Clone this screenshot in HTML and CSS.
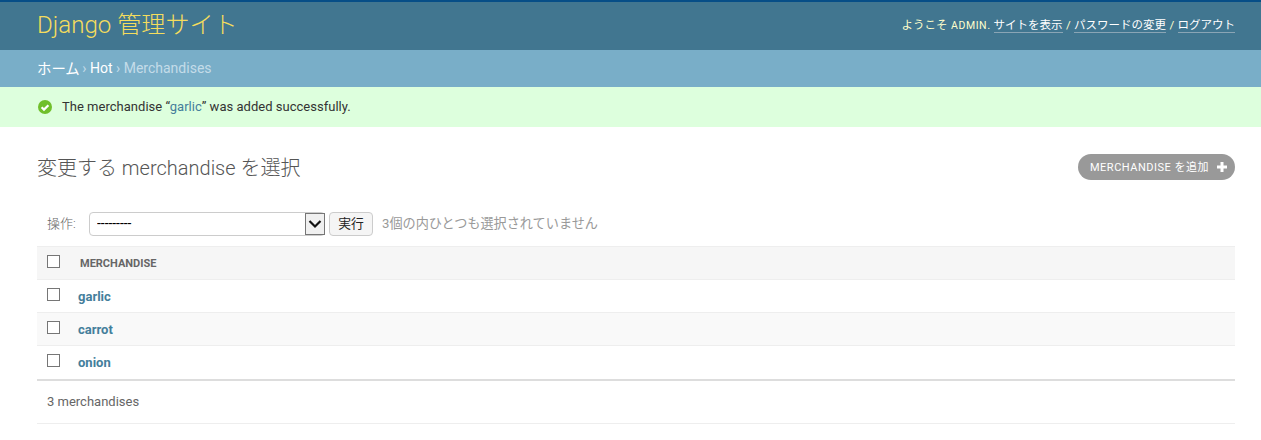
FILE: index.html
```html
<!DOCTYPE html>
<html lang="ja">
<head>
<meta charset="utf-8">
<title>Merchandises</title>
<link rel="stylesheet" href="styles.css">
</head>
<body>
<header class="header">
  <h1 class="brand">Django 管理サイト</h1>
  <div class="tools">ようこそ <strong class="user">ADMIN</strong>. <a href="#">サイトを表示</a> / <a href="#">パスワードの変更</a> / <a href="#">ログアウト</a></div>
</header>
<nav class="crumbs"><a class="home" href="#">ホーム</a> › <a href="#">Hot</a> › Merchandises</nav>
<div class="message">
  <svg class="check" viewBox="0 0 14 14" width="14" height="14"><circle cx="7" cy="7" r="7" fill="#70bf2b"/><path d="M3.6 7.2 6 9.6 10.4 5.2" fill="none" stroke="#fff" stroke-width="2.2"/></svg>
  <span>The merchandise “<a href="#">garlic</a>” was added successfully.</span>
</div>
<main class="content">
  <div class="title-row">
    <h2 class="title">変更する merchandise を選択</h2>
    <a class="add" href="#">MERCHANDISE を追加<svg class="plus" viewBox="0 0 10 10" width="10" height="10"><path d="M5 0V10M0 5H10" stroke="#fff" stroke-width="3"/></svg></a>
  </div>
  <div class="actions">
    <label class="action-label">操作:</label>
    <div class="select-wrap">
      <select class="action-select"><option>---------</option></select>
      <svg class="select-arrow" viewBox="0 0 20 22" width="20" height="22"><rect x=".5" y=".5" width="19" height="21" fill="#f0f0f0" stroke="#767676"/><path d="M4.5 8 10 13.5 15.5 8" fill="none" stroke="#111" stroke-width="2.2"/></svg>
    </div>
    <button class="go" type="button">実行</button>
    <span class="count">3個の内ひとつも選択されていません</span>
  </div>
  <div class="table">
    <div class="row head"><span class="box"></span><span class="col-name">MERCHANDISE</span></div>
    <div class="row"><span class="box"></span><a class="item" href="#">garlic</a></div>
    <div class="row alt"><span class="box"></span><a class="item" href="#">carrot</a></div>
    <div class="row last"><span class="box"></span><a class="item" href="#">onion</a></div>
  </div>
  <div class="paginator">3 merchandises</div>
</main>
</body>
</html>
```
FILE: styles.css
```css
* { box-sizing: border-box; }
html, body { margin: 0; padding: 0; }
body {
  font-family: Roboto, "Noto Sans CJK JP", sans-serif;
  font-size: 14px;
  color: #333;
  background: #fff;
  height: 440px;
  overflow: hidden;
}
a { text-decoration: none; }
.header {
  height: 50px;
  background: #417690;
  border-top: 2px solid #064e87;
  padding: 0 26px 0 37px;
  display: flex;
  align-items: center;
  justify-content: space-between;
  color: #ffc;
}
.brand { margin: 0 0 2px; font-size: 24.1px; font-weight: 300; color: #f5dd5d; line-height: 42px; }
.tools { font-size: 11.5px; line-height: 14px; font-weight: 400; word-spacing: .5px; margin-bottom: 2px; }
.user { font-size: 10.5px; font-weight: 400; letter-spacing: .6px; }
.tools a { color: #fff; border-bottom: 1px solid #8aa5b5; }
.crumbs {
  height: 37px;
  background: #79aec8;
  padding: 0 37px 2px;
  display: flex;
  align-items: center;
  gap: 3.5px;
  font-size: 14px;
  font-weight: 400;
  color: #c4dce8;
}
.crumbs a { color: #fff; }
.crumbs .home { font-size: 14.4px; margin-right: -1px; }
.message {
  height: 40px;
  background: #dfd;
  padding: 0 37px 2px 38px;
  display: flex;
  align-items: center;
  gap: 10px;
  font-size: 13px;
  letter-spacing: .02px;
  color: #333;
}
.message a { color: #447e9b; }
.check { flex: none; margin-top: 2px; }
.content { padding: 0 26px 0 37px; }
.title-row {
  height: 80px;
  display: flex;
  justify-content: space-between;
  align-items: center;
}
.title { margin: 0 0 2px; font-size: 20px; font-weight: 300; color: #555; }
.add {
  display: flex;
  align-items: center;
  gap: 8px;
  height: 26px;
  padding: 0 8px 2px 12px;
  border-radius: 13px;
  background: #999;
  color: #fff;
  font-size: 11px;
  letter-spacing: .5px;
}
.plus { flex: none; margin-top: 2px; }
.actions {
  height: 39px;
  padding: 0 0 5px 10px;
  display: flex;
  align-items: center;
  font-size: 13px;
  color: #999;
}
.action-label { width: 42px; margin-bottom: 3px; font-weight: 300; color: #666; }
.select-wrap { position: relative; width: 236px; height: 24px; margin-right: 4px; }
.action-select {
  appearance: none;
  display: block;
  width: 100%;
  height: 100%;
  padding: 0 0 2px 7px;
  font: 13.8px Roboto, sans-serif;
  color: #000;
  background: #fff;
  border: 1px solid #ccc;
  border-radius: 4px;
}
.select-arrow { position: absolute; right: 0; top: 1px; }
.go {
  width: 44px;
  height: 24px;
  margin-right: 9px;
  padding: 0 0 3px;
  font: 12.8px "Noto Sans CJK JP", sans-serif;
  color: #222;
  background: #f5f5f5;
  border: 1px solid #ccc;
  border-radius: 4px;
}
.count { margin-bottom: 3px; color: #999; font-size: 13.15px; }
.table { border-bottom: 2px solid #ddd; }
.row {
  height: 33px;
  border-bottom: 1px solid #eee;
  padding-left: 10px;
  display: flex;
  align-items: center;
}
.last { border-bottom-color: transparent; }
.head { background: #f6f6f6; border-top: 1px solid #eee; height: 34px; }
.alt { background: #f9f9f9; }
.box {
  flex: none;
  width: 13px;
  height: 13px;
  margin-top: -3px;
  margin-right: 18px;
  border: 1px solid #767676;
  background: #fff;
}
.col-name { margin-left: 2px; font-size: 11px; font-weight: 700; color: #666; }
.item { font-size: 13px; font-weight: 700; color: #447e9b; }
.paginator {
  height: 43px;
  padding: 0 0 2px 10px;
  display: flex;
  align-items: center;
  border-bottom: 1px solid #eee;
  font-size: 13px;
  color: #666;
}
```
